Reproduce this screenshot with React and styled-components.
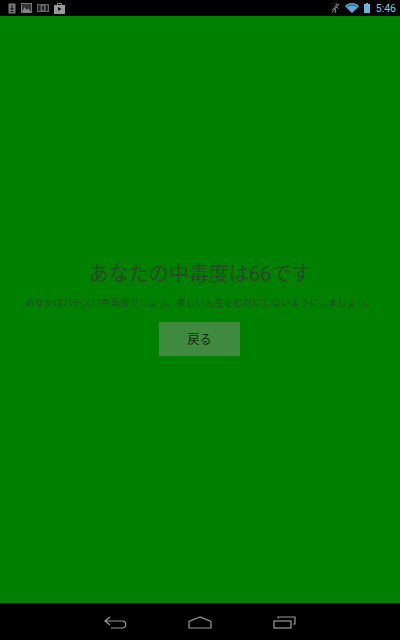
import React from "react";
import styled, { createGlobalStyle } from "styled-components";

const Global = createGlobalStyle`
  html, body { margin: 0; padding: 0; height: 100%; background: #000; }
  #root { height: 100%; }
`;

const Screen = styled.div`
  width: 400px;
  height: 640px;
  display: flex;
  flex-direction: column;
  font-family: "Roboto", "Noto Sans CJK JP", sans-serif;
  overflow: hidden;
`;

const StatusBar = styled.div`
  height: 16px;
  flex: none;
  background: #000;
  display: flex;
  align-items: center;
  justify-content: space-between;
  padding: 0 4px 0 8px;
`;

const IconGroup = styled.div`
  display: flex;
  align-items: center;
  gap: ${({ $gap }) => $gap}px;
`;

const Clock = styled.span`
  color: #8fc5e0;
  font-size: 10.5px;
  margin-left: 1px;
`;

const Main = styled.main`
  flex: 1;
  background: #008000;
  display: flex;
  flex-direction: column;
  align-items: center;
  padding-top: 245px;
`;

const Title = styled.h1`
  margin: 0;
  font-size: 20px;
  line-height: 26px;
  font-weight: 400;
  color: #2a472a;
`;

const Message = styled.p`
  margin: 9px 0 0;
  font-size: 9.5px;
  line-height: 14px;
  white-space: nowrap;
  color: #224a22;
`;

const BackButton = styled.button`
  margin: 12px 1px 0 0;
  width: 81px;
  height: 34px;
  border: 0;
  padding: 0 0 2px;
  background: #408a40;
  color: #0c2a0c;
  font-family: inherit;
  font-size: 12px;
`;

const NavBar = styled.nav`
  height: 37px;
  flex: none;
  background: #000;
  display: flex;
  align-items: center;
  justify-content: center;
  gap: 61px;
  padding-top: 2px;
  box-sizing: border-box;
`;

const Svg = styled.svg`
  display: block;
  flex: none;
`;

export default function App() {
  return (
    <Screen>
      <Global />
      <StatusBar>
        <IconGroup $gap={5}>
          <Svg width="8" height="11" viewBox="0 0 8 11">
            <rect x="0.5" y="0.5" width="7" height="10" fill="#777" />
            <path d="M4 2v4M2.500 5L4 7l1.500-2M2.500 8.500h3" stroke="#111" fill="none" />
          </Svg>
          <Svg width="11" height="10" viewBox="0 0 11 10">
            <rect x="0.5" y="0.5" width="10" height="9" fill="#333" stroke="#777" />
            <path d="M1 9L3.500 4l2 3 1.500-1.500L10 9z" fill="#888" />
          </Svg>
          <Svg width="12" height="8" viewBox="0 0 12 8">
            <rect width="12" height="8" fill="#666" />
            <rect x="1" y="1" width="2.500" height="6" fill="#222" />
            <rect x="8.500" y="1" width="2.500" height="6" fill="#222" />
            <rect x="5" y="2" width="2" height="4" fill="#222" />
          </Svg>
          <Svg width="11" height="12" viewBox="0 0 11 12">
            <path d="M3.500 3V1.500h4V3" stroke="#888" fill="none" />
            <rect y="3" width="11" height="9" fill="#999" />
            <path d="M4 5l3.500 2L4 9z" fill="#111" />
          </Svg>
        </IconGroup>
        <IconGroup $gap={5}>
          <Svg width="9" height="11" viewBox="0 0 9 11">
            <circle cx="5.500" cy="1.500" r="1" fill="#888" />
            <path d="M5 3L3 5.500l2 1.500-1 3M3 5.500L1 7M5 4l2.500 1.500M1 9.500L8 1" stroke="#888" fill="none" />
          </Svg>
          <Svg width="14" height="10" viewBox="0 0 14 10">
            <path d="M0 3.200C4 -1 10 -1 14 3.200L7 10z" fill="#5aa9d6" />
            <path d="M2.400 3.700C5 1.500 9 1.500 11.600 3.700" stroke="#063247" strokeWidth="0.8" fill="none" />
          </Svg>
          <Svg width="6" height="10" viewBox="0 0 6 10">
            <path d="M2 0h2v1h2v9H0V1h2z" fill="#6db5dc" />
          </Svg>
          <Clock>5:46</Clock>
        </IconGroup>
      </StatusBar>
      <Main>
        <Title>あなたの中毒度は66です</Title>
        <Message>あなたはパチスロ中毒者でしょう。楽しい人生をむだにしないようにしましょう。</Message>
        <BackButton>戻る</BackButton>
      </Main>
      <NavBar>
        <Svg width="23" height="13" viewBox="0 0 23 13">
          <path d="M6 1L1 5l5 4M1 5h17c5 0 5 7 0 7H7" stroke="#999" strokeWidth="1.200" fill="none" />
        </Svg>
        <Svg width="24" height="13" viewBox="0 0 24 13">
          <path d="M12 1L1 5.500V12h22V5.500z" stroke="#999" strokeWidth="1.200" fill="none" />
        </Svg>
        <Svg width="23" height="13" viewBox="0 0 23 13">
          <rect x="1" y="5" width="17" height="7" stroke="#999" strokeWidth="1.200" fill="none" />
          <path d="M5 2.500V1h17v7h-2" stroke="#999" strokeWidth="1.200" fill="none" />
        </Svg>
      </NavBar>
    </Screen>
  );
}
